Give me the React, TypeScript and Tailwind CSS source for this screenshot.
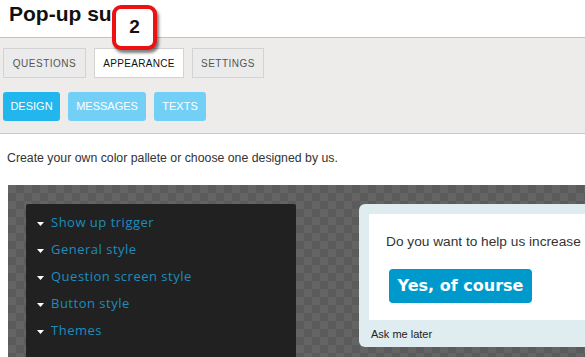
import React from 'react'

const menu = ['Show up trigger', 'General style', 'Question screen style', 'Button style', 'Themes']

export default function App() {
  return (
    <div className="relative w-[585px] h-[357px] overflow-hidden bg-white font-['Liberation_Sans',sans-serif]">
      <div className="h-[38px] border-b border-[#c3c3c3] pl-[9px] pt-[1px]">
        <h1 className="text-[21px] leading-[26px] font-bold text-[#111]">Pop-up su</h1>
      </div>

      <div className="h-[96px] bg-[#edeceb] border-b border-[#c8c8c8] px-[3px] pt-[10px]">
        <div className="flex gap-[8px]">
          <div className="h-[30px] w-[83px] flex items-center justify-center border border-[#d3d3d3] bg-[#ebebeb] text-[10px] tracking-[0.5px] text-[#555]">QUESTIONS</div>
          <div className="h-[30px] w-[90px] flex items-center justify-center border border-[#d3d3d3] bg-white text-[10px] tracking-[0.3px] text-[#111]">APPEARANCE</div>
          <div className="h-[30px] w-[72px] flex items-center justify-center border border-[#d3d3d3] bg-[#ebebeb] text-[10px] tracking-[0.5px] text-[#555]">SETTINGS</div>
        </div>
        <div className="flex gap-[8px] mt-[14px]">
          <div className="h-[29px] w-[57px] flex items-center justify-center rounded-[3px] bg-[#22b6ef] text-[11px] text-white">DESIGN</div>
          <div className="h-[29px] w-[78px] flex items-center justify-center rounded-[3px] bg-[#72d0f7] text-[11px] text-white">MESSAGES</div>
          <div className="h-[29px] w-[52px] flex items-center justify-center rounded-[3px] bg-[#72d0f7] text-[11px] text-white">TEXTS</div>
        </div>
      </div>

      <p className="pl-[7px] pt-[15px] h-[51px] text-[12.3px] text-[#333]">Create your own color pallete or choose one designed by us.</p>

      <div className="ml-[8px] h-[172px] flex pt-[19px] bg-[conic-gradient(#5b5b5b_25%,#646464_0_50%,#5b5b5b_0_75%,#646464_0)] bg-[length:16px_16px]">
        <div className="ml-[18px] w-[270px] rounded-t-[2px] bg-[#212121] pt-[5px] pl-[11px] font-['Open_Sans',sans-serif]">
          {menu.map((m) => (
            <div key={m} className="flex items-center h-[27px] text-[13px] text-[#1b8dbe] tracking-[0.5px]">
              <svg width="7" height="4" viewBox="0 0 7 4" className="mr-[7px] mt-[2px]">
                <polygon points="0,0 7,0 3.5,4" fill="#fff" />
              </svg>
              {m}
            </div>
          ))}
        </div>
        <div className="ml-[63px] h-[143px] flex-1 rounded-l-[6px] bg-[#dfedf1] pl-[10px] pt-[10px]">
          <div className="h-[106px] bg-white pl-[17px] pt-[18px] overflow-hidden">
            <div className="text-[13.7px] text-[#333] whitespace-nowrap">Do you want to help us increase</div>
            <div className="mt-[16px] ml-[3px] inline-flex items-center justify-center h-[34px] w-[143px] rounded-[4px] bg-[#0099cc] text-white font-bold text-[16px] font-['DejaVu_Sans',sans-serif]">Yes, of course</div>
          </div>
          <div className="pl-[2px] pt-[6px] text-[11px] text-[#222]">Ask me later</div>
        </div>
      </div>

      <div className="absolute left-[112px] top-[5px] w-[45px] h-[45px] rounded-[9px] border-[4px] border-[#ee1111] bg-white flex items-center justify-center shadow-[2px_3px_3px_rgba(0,0,0,0.5)]">
        <span className="text-[19px] font-bold text-[#111]">2</span>
      </div>
    </div>
  )
}
